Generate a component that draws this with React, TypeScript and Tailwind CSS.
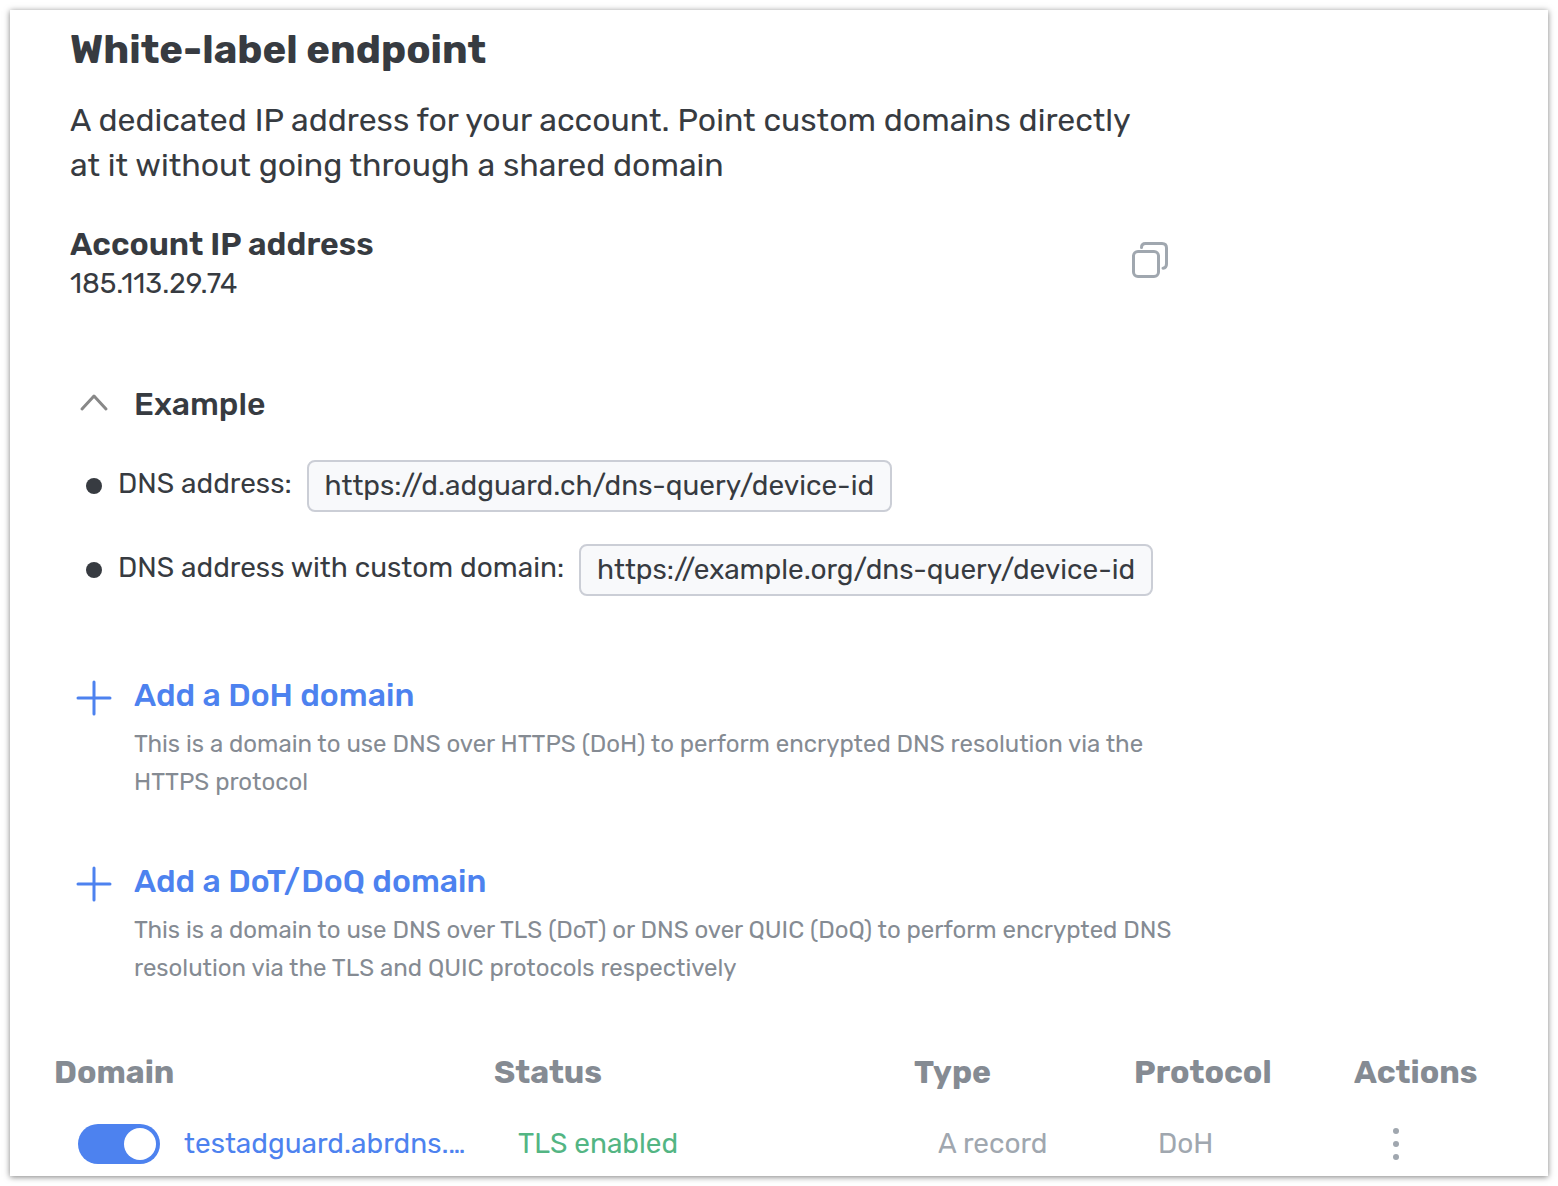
import { useState } from "react";

const examples = [
  { label: "DNS address:", url: "https://d.adguard.ch/dns-query/device-id" },
  { label: "DNS address with custom domain:", url: "https://example.org/dns-query/device-id" },
];

const actions = [
  {
    title: "Add a DoH domain",
    text: "This is a domain to use DNS over HTTPS (DoH) to perform encrypted DNS resolution via the HTTPS protocol",
  },
  {
    title: "Add a DoT/DoQ domain",
    text: "This is a domain to use DNS over TLS (DoT) or DNS over QUIC (DoQ) to perform encrypted DNS resolution via the TLS and QUIC protocols respectively",
  },
];

function CopyIcon() {
  return (
    <svg width="48" height="48" viewBox="0 0 48 48" fill="none" stroke="#a0a7af" strokeWidth="3" strokeLinecap="round" aria-hidden="true">
      <rect x="7.5" y="15.5" width="25" height="25" rx="4.5" />
      <path d="M15.5 11.5C15.5 9 17 7.5 19.5 7.500H36C39 7.500 40.500 9 40.500 12V28C40.500 30.500 39.500 32 37 32.200" />
    </svg>
  );
}

function PlusIcon() {
  return (
    <svg className="shrink-0" width="48" height="48" viewBox="0 0 48 48" fill="none" stroke="#4d82ef" strokeWidth="3" strokeLinecap="round" aria-hidden="true">
      <path d="M24 8V40M8 24H40" />
    </svg>
  );
}

function Switch({ id }: { id: string }) {
  const [on, setOn] = useState(true);
  return (
    <span className="relative flex h-10 w-[82px] shrink-0">
      <input
        id={id}
        type="checkbox"
        role="switch"
        checked={on}
        onChange={() => setOn(!on)}
        className="peer h-10 w-[82px] cursor-pointer appearance-none rounded-full bg-gray-400 checked:bg-[#4d82ef]"
      />
      <span className="pointer-events-none absolute top-1 left-1 size-8 rounded-full bg-white peer-checked:right-1 peer-checked:left-auto" />
    </span>
  );
}

export default function App() {
  const [open, setOpen] = useState(true);
  return (
    <div className="bg-white p-[10px] font-[Rubik,Roboto,sans-serif] text-[#373b41]">
      <main className="bg-white pt-4 pb-3 shadow-[0_1px_6px_rgba(0,0,0,0.5)]">
        <section className="max-w-[1180px] pl-[60px]">
          <h1 className="text-[40px] leading-[48px] font-bold">White-label endpoint</h1>
          <p className="mt-6 max-w-[1090px] text-[32px] leading-[45px]">
            A dedicated IP address for your account. Point custom domains directly at it without going through a shared domain
          </p>
          <div className="mt-9 flex items-start justify-between pr-4">
            <div>
              <h2 className="text-[32px] leading-10 font-semibold">Account IP address</h2>
              <p className="text-[28px] leading-10">185.113.29.74</p>
            </div>
            <button type="button" aria-label="Copy IP address" className="mt-3 cursor-pointer">
              <CopyIcon />
            </button>
          </div>
          <button
            type="button"
            aria-expanded={open}
            onClick={() => setOpen(!open)}
            className="mt-[76px] flex cursor-pointer items-center gap-4 text-[32px] leading-[48px] font-medium"
          >
            <svg width="48" height="48" viewBox="0 0 48 48" fill="none" stroke="#888" strokeWidth="3" strokeLinecap="round" strokeLinejoin="round" aria-hidden="true">
              <path d="M12 29L24 16L36 29" />
            </svg>
            Example
          </button>
          {open && (
            <ul className="mt-8 flex flex-col gap-8 text-[28px]">
              {examples.map((e) => (
                <li key={e.url} className="flex items-center pl-4">
                  <span className="size-4 shrink-0 rounded-full bg-[#373b41]" />
                  <span className="ml-4 pb-1 leading-[48px]">{e.label}</span>
                  <code className="ml-[15px] rounded-lg border-2 border-[#cbced6] bg-[#f8f9fb] px-4 font-[Rubik,Roboto,sans-serif] leading-[48px]">
                    {e.url}
                  </code>
                </li>
              ))}
            </ul>
          )}
          <div className="mt-[78px] flex flex-col gap-[59px]">
            {actions.map((a) => (
              <button key={a.title} type="button" className="flex cursor-pointer items-start gap-4 text-left">
                <PlusIcon />
                <span className="flex flex-col gap-[9px]">
                  <span className="text-[32px] leading-[42px] font-medium text-[#4d82ef]">{a.title}</span>
                  <span className="text-[24px] leading-[38px] text-[#858b93]">{a.text}</span>
                </span>
              </button>
            ))}
          </div>
        </section>
        <div className="mt-[61px] pl-11">
          <table className="w-full table-fixed text-left">
            <colgroup>
              <col className="w-[440px]" />
              <col className="w-[420px]" />
              <col className="w-[220px]" />
              <col className="w-[220px]" />
              <col />
            </colgroup>
            <thead>
              <tr className="h-12 text-[32px] leading-[48px] text-[#858b93]">
                {["Domain", "Status", "Type", "Protocol", "Actions"].map((h) => (
                  <th key={h} scope="col" className="font-bold">{h}</th>
                ))}
              </tr>
            </thead>
            <tbody>
              <tr className="text-[28px] leading-10 text-[#a0a7af]">
                <td className="pt-7 pl-6">
                  <div className="flex items-center gap-6">
                    <Switch id="domain-enabled" />
                    <label htmlFor="domain-enabled" className="w-[286px] truncate text-[#4d82ef]">
                      testadguard.abrdns.com
                    </label>
                  </div>
                </td>
                <td className="pt-7 pl-6 text-[#53b583]">TLS enabled</td>
                <td className="pt-7 pl-6">A record</td>
                <td className="pt-7 pl-6">DoH</td>
                <td className="pt-7 pl-[18px]">
                  <button type="button" aria-label="Domain actions" className="flex cursor-pointer">
                    <svg width="48" height="40" viewBox="0 0 48 40" fill="#a0a7af" aria-hidden="true">
                      <circle cx="24" cy="7" r="3" />
                      <circle cx="24" cy="20" r="3" />
                      <circle cx="24" cy="33" r="3" />
                    </svg>
                  </button>
                </td>
              </tr>
            </tbody>
          </table>
        </div>
      </main>
    </div>
  );
}
